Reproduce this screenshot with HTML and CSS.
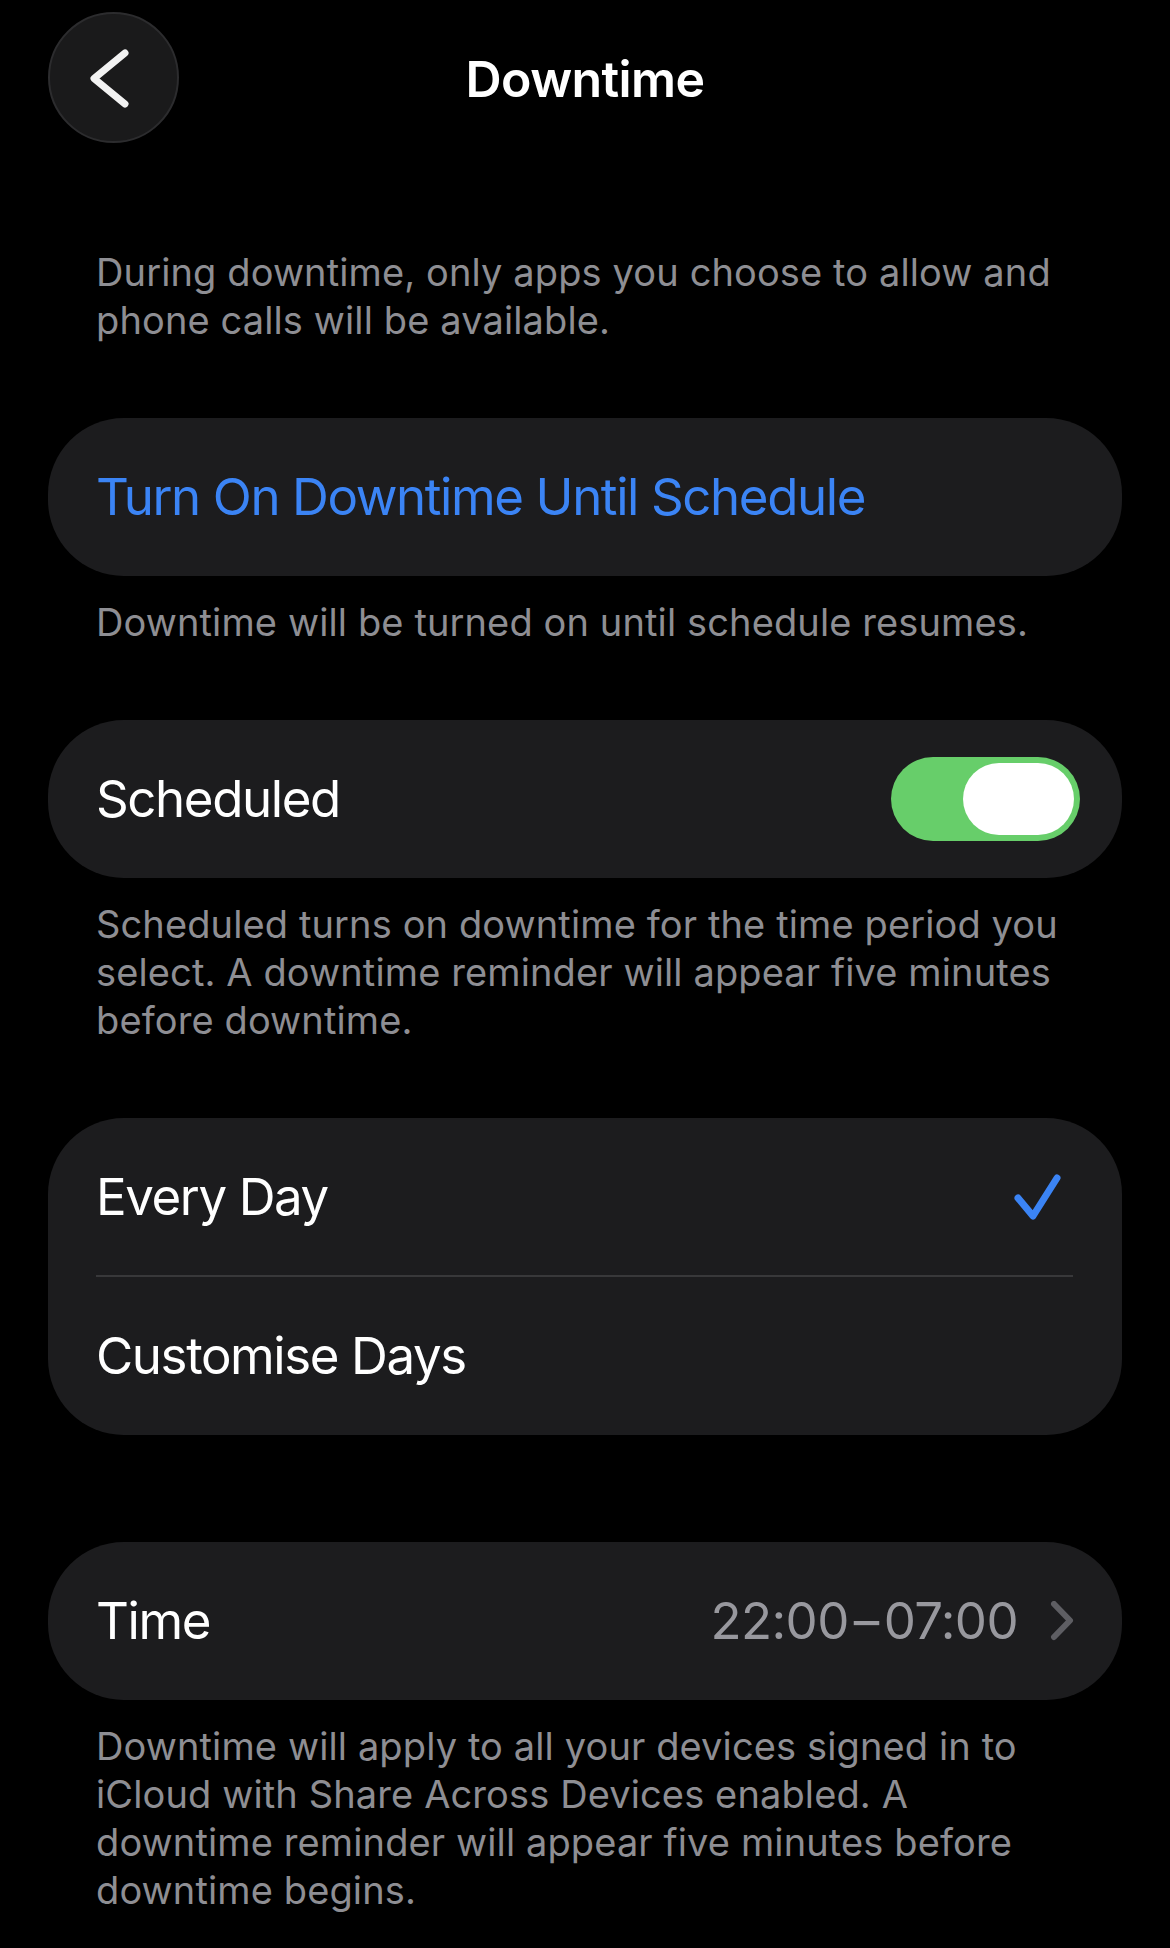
FILE: index.html
```html
<!DOCTYPE html>
<html lang="en">
<head>
<meta charset="utf-8">
<title>Downtime</title>
<link rel="stylesheet" href="styles.css">
</head>
<body>
<main class="screen">
  <header class="nav">
    <button class="back" aria-label="Back">
      <svg class="back-icon" viewBox="0 0 131 131" width="131" height="131">
        <polyline points="77,41 46,66.5 77,92" />
      </svg>
    </button>
    <h1 class="title">Downtime</h1>
    <span class="nav-spacer"></span>
  </header>

  <p class="note note-intro">During downtime, only apps you choose to allow and<br>phone calls will be available.</p>

  <section class="group">
    <div class="row">
      <span class="label label-link">Turn On Downtime Until Schedule</span>
    </div>
  </section>
  <p class="note">Downtime will be turned on until schedule resumes.</p>

  <section class="group">
    <div class="row row-switch">
      <span class="label">Scheduled</span>
      <span class="switch is-on"><span class="knob"></span></span>
    </div>
  </section>
  <p class="note">Scheduled turns on downtime for the time period you<br>select. A downtime reminder will appear five minutes<br>before downtime.</p>

  <section class="group">
    <div class="row row-first">
      <span class="label">Every Day</span>
      <svg class="check" viewBox="0 0 50 50" width="50" height="50">
        <polyline points="6,26 21,44 45,6" />
      </svg>
    </div>
    <div class="divider"></div>
    <div class="row">
      <span class="label">Customise Days</span>
    </div>
  </section>

  <section class="group group-time">
    <div class="row">
      <span class="label">Time</span>
      <span class="value">22:00<span class="dash">–</span>07:00</span>
      <svg class="disclosure" viewBox="0 0 24 40" width="24" height="40">
        <polyline points="4,3 20,19.5 4,36" />
      </svg>
    </div>
  </section>
  <p class="note">Downtime will apply to all your devices signed in to<br>iCloud with Share Across Devices enabled. A<br>downtime reminder will appear five minutes before<br>downtime begins.</p>
</main>
</body>
</html>
```

FILE: styles.css
```css
* {
  box-sizing: border-box;
}

html,
body {
  margin: 0;
  padding: 0;
  background: #000;
}

body {
  font-family: Inter, "Noto Sans", "Liberation Sans", sans-serif;
  color: #fff;
  -webkit-font-smoothing: antialiased;
}

.screen {
  width: 1170px;
  min-height: 1948px;
  padding: 12px 48px 0;
  display: flex;
  flex-direction: column;
}

/* navigation bar */
.nav {
  display: grid;
  grid-template-columns: 131px 1fr 131px;
  align-items: center;
  height: 131px;
}

.back {
  width: 131px;
  height: 131px;
  padding: 0;
  border-radius: 50%;
  background: #1a1a1b;
  border: 2px solid #2c2c2e;
  display: flex;
  align-items: center;
  justify-content: center;
}

.back-icon {
  display: block;
  margin: -2px;
}

.back-icon polyline {
  fill: none;
  stroke: #f2f2f2;
  stroke-width: 7;
  stroke-linecap: round;
  stroke-linejoin: round;
}

.title {
  margin: 0;
  text-align: center;
  font-size: 50px;
  font-weight: 600;
  letter-spacing: -0.6px;
  line-height: 62px;
  padding-top: 2px;
}

/* explanatory text under groups */
.note {
  margin: 22px 0 74px;
  padding: 0 48px;
  font-size: 38px;
  line-height: 48px;
  color: #8e8e93;
  letter-spacing: 0.12px;
  white-space: nowrap;
}

.note-intro {
  margin-top: 105px;
}

/* grouped list cards */
.group {
  background: #1c1c1e;
  border-radius: 76px;
}

.group-time {
  margin-top: 107px;
}

.row {
  height: 158px;
  display: flex;
  align-items: center;
  padding: 0 50px 0 48px;
}

.row-first {
  height: 157px;
}

.label {
  flex: 1;
  font-size: 51px;
  line-height: 62px;
  letter-spacing: -1.4px;
  color: #fff;
}

.label-link {
  color: #3b84f5;
}

.divider {
  height: 2px;
  margin: 0 49px 0 48px;
  background: #38383a;
}

/* toggle switch */
.row-switch {
  padding-right: 42px;
}

.switch {
  width: 189px;
  height: 84px;
  border-radius: 42px;
  background: #3a3a3c;
  display: flex;
  align-items: center;
  padding: 6px;
}

.switch.is-on {
  background: #67ce6a;
  justify-content: flex-end;
}

.knob {
  width: 111px;
  height: 72px;
  border-radius: 36px;
  background: #fff;
}

/* selection checkmark */
.check {
  margin-right: 10px;
}

.check polyline {
  fill: none;
  stroke: #3b84f5;
  stroke-width: 7;
  stroke-linecap: round;
  stroke-linejoin: round;
}

/* value + disclosure chevron */
.value {
  font-size: 51px;
  line-height: 62px;
  letter-spacing: -0.6px;
  color: #98989e;
  margin-right: 32px;
}

.dash {
  margin: 0 5px;
}

.disclosure {
  margin-right: -2px;
}

.disclosure polyline {
  fill: none;
  stroke: #5e5e63;
  stroke-width: 6;
  stroke-linecap: round;
  stroke-linejoin: round;
}
```
